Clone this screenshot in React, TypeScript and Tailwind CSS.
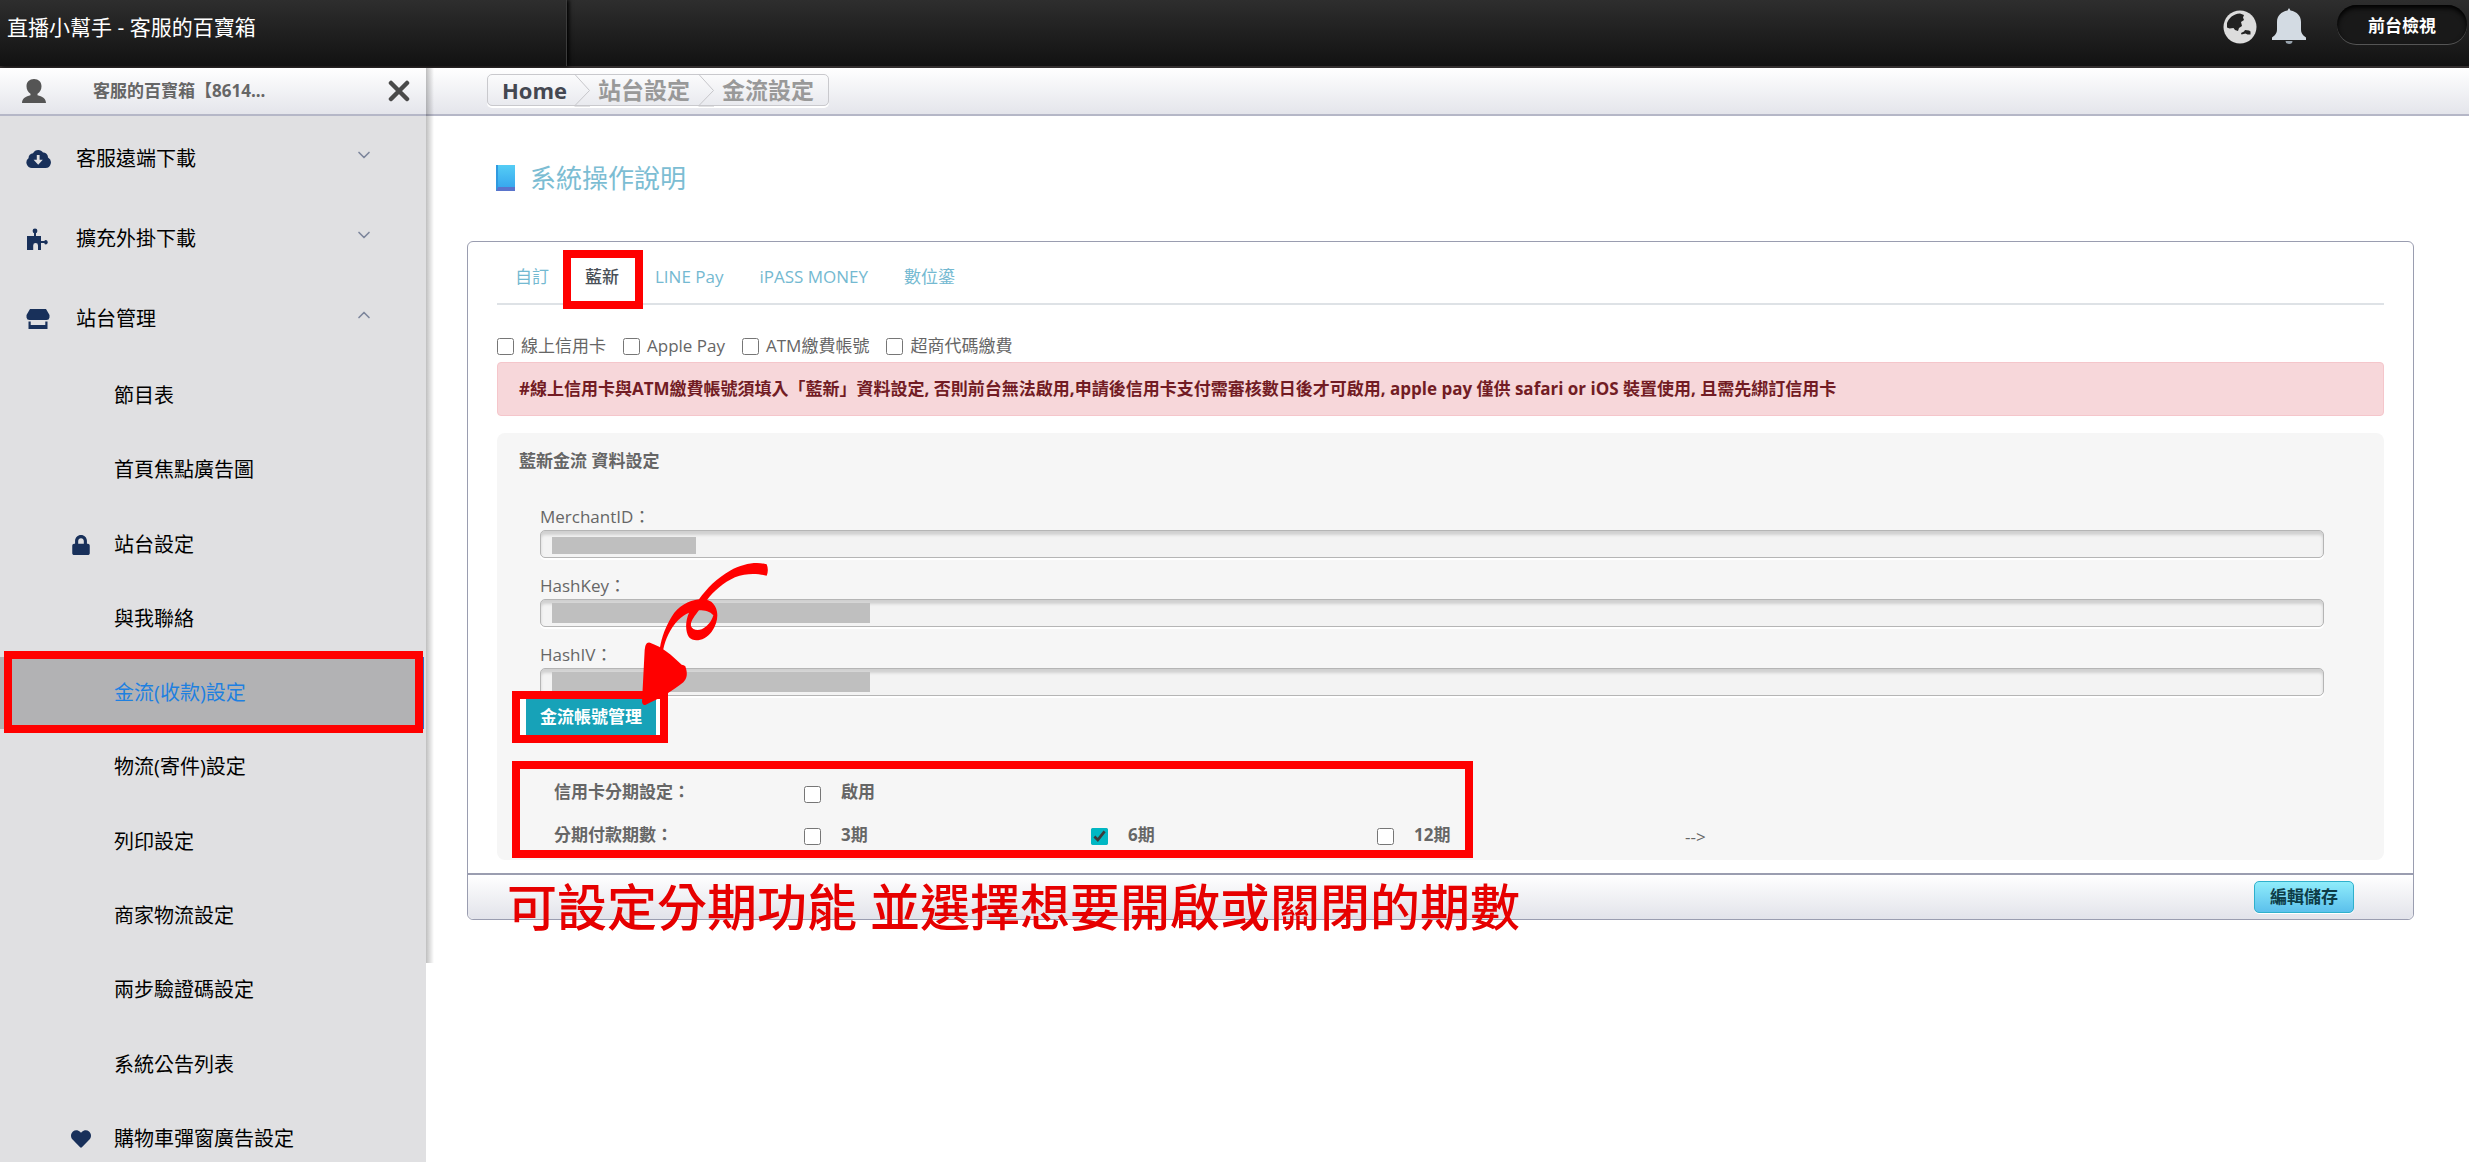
import { useState, type ReactNode } from "react";
import { FaLock, FaHeart } from "react-icons/fa";
import { LuChevronDown, LuChevronUp } from "react-icons/lu";

interface SubItem {
  label: string;
  icon?: ReactNode;
  active?: boolean;
}

const SUB_ITEMS: SubItem[] = [
  { label: "節目表" },
  { label: "首頁焦點廣告圖" },
  { label: "站台設定", icon: <FaLock className="h-5 w-[18px]" /> },
  { label: "與我聯絡" },
  { label: "金流(收款)設定", active: true },
  { label: "物流(寄件)設定" },
  { label: "列印設定" },
  { label: "商家物流設定" },
  { label: "兩步驗證碼設定" },
  { label: "系統公告列表" },
  { label: "購物車彈窗廣告設定", icon: <FaHeart className="size-5" /> },
];

const TABS = ["自訂", "藍新", "LINE Pay", "iPASS MONEY", "數位鎏"];
const METHODS = ["線上信用卡", "Apple Pay", "ATM繳費帳號", "超商代碼繳費"];

function UserIcon() {
  return (
    <svg viewBox="0 0 24 24" className="size-6" fill="#555">
      <path d="M12 0c4.500 0 7.500 3 7.500 7.200 0 3.300-1.700 6.300-4 7.600v1.400c4.500 1 8.500 3.300 8.500 7.800H0c0-4.500 4-6.800 8.500-7.800v-1.400c-2.300-1.300-4-4.300-4-7.600C4.500 3 7.500 0 12 0z" />
    </svg>
  );
}

function CloudIcon() {
  return (
    <svg viewBox="0 0 25 24" className="h-6 w-[25px]">
      <path
        d="M6 21a5.500 5.500 0 0 1-3.500-9.800C2.500 8.500 4.500 6.500 7 6.300 8 4.200 10 3 12.300 3c2 0 3.700 1 4.700 2.500 3 0 5 2.200 5 5A5.600 5.600 0 0 1 19.500 21z"
        fill="currentColor"
      />
      <path d="M10.800 8h2.800v4.800h3.200l-4.600 5-4.600-5h3.200z" fill="#e0e0e2" />
    </svg>
  );
}

function PuzzleIcon() {
  return (
    <svg viewBox="0 0 24 24" className="size-6" fill="currentColor">
      <circle cx="9" cy="4" r="2.4" />
      <path d="M8 4h2v5h5v5h3.500v-.5a2.100 2.100 0 1 1 0 3.500V16H15v7h-3v-4.500a2.400 2.400 0 0 0-4.800 0V23H1V9h7z" />
    </svg>
  );
}

function StoreIcon() {
  return (
    <svg viewBox="0 0 24 24" className="size-6" fill="currentColor">
      <path d="M4 2h16l3.500 6v2.500a3 3 0 0 1-3 2.500H3.500a3 3 0 0 1-3-2.500V8z" />
      <path d="M2.500 14.500h2.200V18h14.600v-3.500h2.200V22h-19z" />
    </svg>
  );
}

function GlobeIcon() {
  return (
    <svg viewBox="0 0 34 34" className="size-[34px]">
      <circle cx="17" cy="17" r="16.500" fill="#dcdcdc" />
      <path
        d="M4 13c2-5 6-9 13-9.500l4 1.500-1 2.500 1 2.500-3 2 1 4-3 2-1 3-3-1-1.500-2-4 .5-2.500-1z"
        fill="#222"
      />
      <path d="M18 23l3-1.500 1-1.500 4 .5 1.500 1v3h-3l-2-1-4 1z" fill="#222" />
    </svg>
  );
}

function BellIcon() {
  return (
    <svg viewBox="0 0 34 36" className="h-9 w-[34px]">
      <path
        d="M17 0l1.500 2.500C25 3.500 29 8 29 14v7c0 4 1.500 6 5 8.500V32H0v-2.500C3.500 27 5 25 5 21v-7C5 8 9 3.500 15.500 2.500z"
        fill="#d3dbe3"
      />
      <path d="M13.500 33h7a3.500 3 0 0 1-7 0z" fill="#98a3ad" />
    </svg>
  );
}

/** Red marker frame laid over a control */
function Frame({ className }: { className: string }) {
  return (
    <span
      className={`pointer-events-none absolute z-10 border-8 border-[#ff0000] ${className}`}
    />
  );
}

function Crumb() {
  return (
    <svg viewBox="0 0 16 34" className="h-[34px] w-4 shrink-0" fill="none">
      <path d="M0.500 1L15.500 17.500 0.500 33H16" stroke="#c6c6ca" />
    </svg>
  );
}

function CurlyArrow() {
  return (
    <svg
      viewBox="90 30 390 441"
      className="pointer-events-none absolute -top-[139px] left-[120px] z-20 h-[147px] w-[130px]"
      fill="#ff0000"
    >
      <path
        fillRule="evenodd"
        d="M470 43C440 34 400 40 360 62 320 85 290 115 267 148 235 152 205 168 185 200 168 228 155 260 150 292L150 310 160 297C166 270 180 235 205 210 215 200 226 192 237 188 225 215 226 245 237 262 252 278 285 272 305 245 322 222 326 195 318 175 312 160 302 152 291 150 310 125 340 98 375 82 410 68 445 71 470 77Q477 60 470 43ZM267 181C285 181 300 184 310 196 305 215 290 232 275 238 262 243 247 240 243 228 240 215 255 197 267 181Z"
      />
      <path d="M106 288Q110 276 120 278C160 292 185 315 215 344Q222 345 226 349C234 372 231 385 220 397 190 422 150 445 106 465Q97 465 96 455L104 300Z" />
    </svg>
  );
}

function Checkbox({ id, checked = false }: { id: string; checked?: boolean }) {
  return (
    <input
      id={id}
      type="checkbox"
      defaultChecked={checked}
      className="size-[17px] shrink-0 accent-[#00b7c3]"
    />
  );
}

function Field({ id, label, mask }: { id: string; label: string; mask?: string }) {
  return (
    <div className="relative">
      <label htmlFor={id} className="block h-[26px] leading-[26px]">
        {label}：
      </label>
      <input
        id={id}
        type="text"
        className="block h-7 w-full rounded-[5px] border border-[#b5b5b5] bg-[#f3f3f3] px-3 shadow-[inset_0_4px_3px_rgba(0,0,0,0.14),0_2px_0_#fff]"
      />
      <span className={`absolute bottom-1 left-3 bg-[#bfbfbf] ${mask}`} />
    </div>
  );
}

function TopBar() {
  return (
    <header className="flex h-[68px] shrink-0 border-b-2 border-[#332f2f] bg-linear-to-b from-[#2e2e2e] to-[#121212] text-white">
      <div className="w-[567px] border-r border-[#3c3c3c] pl-[7px] text-[21px] leading-[54px] shadow-[2px_0_4px_#000]">
        直播小幫手 - 客服的百寶箱
      </div>
      <div className="ml-auto flex items-start gap-[15px] pt-[5px]">
        <button type="button" aria-label="語言" className="mt-[5px]">
          <GlobeIcon />
        </button>
        <button type="button" aria-label="通知" className="mt-[3px]">
          <BellIcon />
        </button>
        <a
          href="#front"
          className="mr-[2px] ml-4 h-[39px] w-[130px] rounded-full bg-[#191919] text-center text-[17px] leading-[42px] font-bold shadow-[inset_0_3px_5px_#000,0_1px_0_#555]"
        >
          前台檢視
        </a>
      </div>
    </header>
  );
}

function MenuRow({ icon, label, open }: { icon: ReactNode; label: string; open?: boolean }) {
  return (
    <button type="button" className="flex h-20 w-full items-center pr-[52px] pl-[26px] text-left">
      <span className="w-[50px] text-[#18305a]">{icon}</span>
      <span className="flex-1">{label}</span>
      <span className="mb-2 text-[#7d869c]">
        {open ? <LuChevronUp className="size-5" /> : <LuChevronDown className="size-5" />}
      </span>
    </button>
  );
}

function Sidebar() {
  return (
    <aside className="relative w-[426px] shrink-0 bg-[#e0e0e2] text-xl text-black">
      <div className="flex h-12 items-center border-b-2 border-[#b5b7c7] bg-linear-to-b from-white to-[#e4e5eb] pr-4 pl-[22px]">
        <UserIcon />
        <span className="ml-[47px] flex-1 text-[17px] font-bold text-[#666]">
          客服的百寶箱【8614...
        </span>
        <button type="button" aria-label="關閉">
          <svg viewBox="0 0 22 22" className="size-[22px]" stroke="#4a4a4a" strokeWidth="4.500" strokeLinecap="round">
            <path d="M3 3l16 16M19 3L3 19" />
          </svg>
        </button>
      </div>
      <nav className="pt-[3px]">
        <MenuRow icon={<CloudIcon />} label="客服遠端下載" />
        <MenuRow icon={<PuzzleIcon />} label="擴充外掛下載" />
        <MenuRow icon={<StoreIcon />} label="站台管理" open />
        <ul className="grid h-[817px] auto-rows-fr">
          {SUB_ITEMS.map((item) => (
            <li key={item.label} className="flex items-center">
              <a
                href="#menu"
                className={`relative flex h-[72px] w-[424px] items-center ${
                  item.active
                    ? "border-r border-[#2f6fc8] bg-[#b2b2b4] text-[#1e80e0]"
                    : ""
                }`}
              >
                <span className="flex w-[114px] justify-center pl-12 text-[#18305a]">
                  {item.icon}
                </span>
                {item.label}
                {item.active && <Frame className="-top-[6px] right-0 -bottom-1 left-1" />}
              </a>
            </li>
          ))}
        </ul>
      </nav>
      <div className="absolute top-0 left-full z-10 h-[895px] w-2 bg-linear-to-r from-black/25 to-transparent" />
    </aside>
  );
}

function PeriodOption({ id, label, checked }: { id: string; label: string; checked?: boolean }) {
  return (
    <div className="flex items-center gap-5">
      <span className="flex pt-1">
        <Checkbox id={id} checked={checked} />
      </span>
      <label htmlFor={id}>{label}</label>
    </div>
  );
}

function PaymentPanel() {
  const [tab, setTab] = useState("藍新");

  return (
    <section className="relative mt-[45px] rounded-md border border-[#9a9db0]">
      <div className="px-[29px] pt-2 pb-[13px]">
        <div role="tablist" className="flex h-[55px] border-b-2 border-[#dee2e6]">
          {TABS.map((name) => (
            <button
              key={name}
              type="button"
              role="tab"
              aria-selected={tab === name}
              onClick={() => setTab(name)}
              className={`relative h-[53px] px-[18px] ${
                tab === name ? "font-medium text-[#495057]" : "text-[#74b9d1]"
              }`}
            >
              {name}
              {name === "藍新" && <Frame className="top-0 -right-[6px] -bottom-[6px] -left-1" />}
            </button>
          ))}
        </div>

        <div className="mt-[27px] flex h-7 items-center gap-[17px]">
          {METHODS.map((m) => (
            <div key={m} className="flex items-center gap-[7px]">
              <Checkbox id={m} />
              <label htmlFor={m}>{m}</label>
            </div>
          ))}
        </div>

        <p className="mt-[2px] h-[54px] rounded-[4px] border border-[#f5c6cb] bg-[#f7d7da] pl-[21px] leading-[52px] font-bold text-[#721c24]">
          #線上信用卡與ATM繳費帳號須填入「藍新」資料設定, 否則前台無法啟用,申請後信用卡支付需審核數日後才可啟用, apple pay 僅供 safari or iOS 裝置使用, 且需先綁訂信用卡
        </p>

        <div className="mt-[17px] rounded-lg bg-[#f6f6f6] pt-[14px] pb-1">
          <h2 className="pl-[22px] leading-7 font-bold">藍新金流 資料設定</h2>
          <div className="mt-[29px] mr-[60px] ml-[43px] flex flex-col gap-[15px]">
            <Field id="merchant-id" label="MerchantID" mask="h-[17px] w-[144px]" />
            <Field id="hash-key" label="HashKey" mask="h-5 w-[318px]" />
            <Field id="hash-iv" label="HashIV" mask="h-5 w-[318px]" />
          </div>

          <div className="relative mt-[3px] ml-[23px] flex h-9 w-[140px] bg-white">
            <button type="button" className="ml-[6px] bg-[#17a2b8] px-[14px] font-bold text-white">
              金流帳號管理
            </button>
            <Frame className="-inset-x-2 -inset-y-2" />
            <CurlyArrow />
          </div>

          <div className="relative mt-9 ml-[57px] font-bold">
            <div className="grid h-[42px] grid-cols-[250px_287px] items-center">
              <span>信用卡分期設定：</span>
              <PeriodOption id="enable" label="啟用" />
            </div>
            <div className="grid h-[43px] grid-cols-[250px_287px_286px_308px_auto] items-center">
              <span>分期付款期數：</span>
              <PeriodOption id="p3" label="3期" />
              <PeriodOption id="p6" label="6期" checked />
              <PeriodOption id="p12" label="12期" />
              <span className="pt-1 font-normal">--&gt;</span>
            </div>
            <Frame className="-top-[10px] -bottom-[2px] -left-[42px] w-[961px]" />
          </div>
        </div>
      </div>

      <footer className="flex h-[46px] items-center justify-between rounded-b-md border-t-2 border-[#9a9db0] bg-linear-to-b from-white to-[#e2e3ea] pr-[59px] pl-[39px]">
        <strong className="pt-5 text-[50px] leading-none font-medium text-[#e60000]">
          可設定分期功能 並選擇想要開啟或關閉的期數
        </strong>
        <button
          type="button"
          className="h-8 rounded-[5px] border border-[#2fb0cc] bg-linear-to-b from-[#8fecfa] to-[#5bc0ec] px-[15px] font-bold text-[#0d3c47] shadow-[0_1px_0_#fff]"
        >
          編輯儲存
        </button>
      </footer>
    </section>
  );
}

export default function App() {
  return (
    <div className="flex h-screen flex-col overflow-hidden bg-white font-['Open_Sans','Noto_Sans_CJK_TC',sans-serif] text-[17px] text-[#666]">
      <TopBar />
      <div className="flex min-h-0 flex-1">
        <Sidebar />
        <main className="min-w-0 flex-1">
          <div className="flex h-12 items-center border-b-2 border-[#b5b7c7] bg-linear-to-b from-white to-[#e4e5eb] pl-[61px]">
            <nav className="mb-[2px] flex h-8 items-center rounded-[5px] border border-[#c9c9cd] pr-[14px] pl-[14px] text-[23px] font-bold text-[#999] shadow-[0_2px_0_#fff]">
              <a href="#home" className="mr-[7px] text-[22px] text-[#444751]">
                Home
              </a>
              <Crumb />
              <a href="#site" className="mx-2">
                站台設定
              </a>
              <Crumb />
              <a href="#payment" className="ml-2">
                金流設定
              </a>
            </nav>
          </div>
          <div className="pt-[44px] pr-[55px] pl-[41px]">
            <h1 className="flex h-9 items-center gap-[15px] pl-[29px] text-[26px] text-[#7cbdd3]">
              <span className="h-[26px] w-[19px] border-b-4 border-l-2 border-b-[#5a74cc] border-l-[#2f9ae0] bg-linear-to-b from-[#55cdf5] to-[#38a8ee]" />
              系統操作說明
            </h1>
            <PaymentPanel />
          </div>
        </main>
      </div>
    </div>
  );
}
